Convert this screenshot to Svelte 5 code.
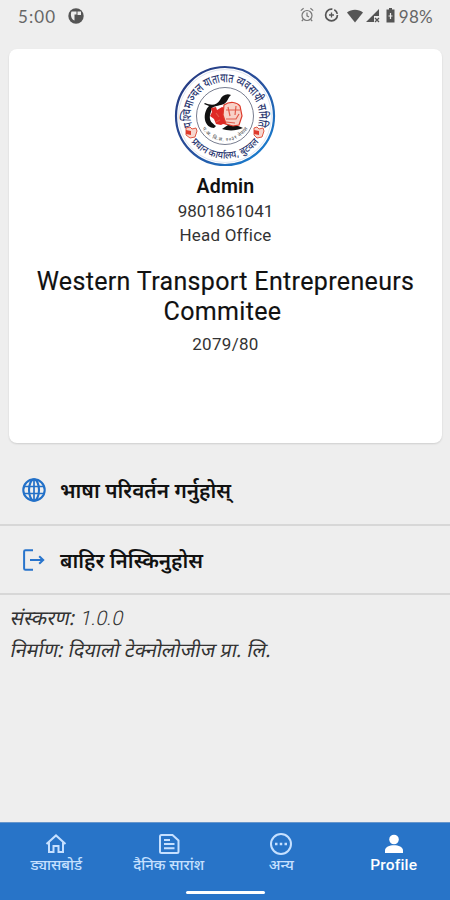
<script>
  const tabs = [
    { label: 'ड्यासबोर्ड', icon: 'home' },
    { label: 'दैनिक सारांश', icon: 'doc' },
    { label: 'अन्य', icon: 'more' },
    { label: 'Profile', icon: 'person', active: true }
  ];
</script>

<div class="screen">
  <header class="status">
    <span class="time">5:00</span>
    <svg class="notify" width="16" height="16" viewBox="0 0 16 16">
      <circle cx="8" cy="8" r="7.7" fill="#555" />
      <path d="M3.500 3.500h5v3h-2v6C3.500 11.500 2 7 3.500 3.500zM9.500 3.500H13v3.500H9.500z" fill="#eee" />
    </svg>
    <div class="system">
      <svg width="14" height="16" viewBox="0 0 14 16" fill="none" stroke="#777" stroke-width="1.200">
        <circle cx="7" cy="8.500" r="5" /><path d="M.8 3.600 3.600 1.300M13.200 3.600 10.400 1.300M7 5.500v3.300l2 1.200M3.200 12.500l-1.400 1.700M10.800 12.500l1.400 1.700" />
      </svg>
      <svg class="saver" width="15" height="16" viewBox="0 0 15 16" fill="none" stroke="#555">
        <circle cx="7.500" cy="8" r="5.900" stroke-width="1.700" stroke-dasharray="28 2 5 2" /><path d="M7.500 5.500v5M5 8h5" stroke-width="1.300" />
      </svg>
      <svg class="wifi" width="16" height="14" viewBox="0 0 16 14"><path d="M0 3.500C4.500-.3 11.500-.3 16 3.500L8 13.500z" fill="#555" /></svg>
      <svg class="signal" width="14" height="14" viewBox="0 0 14 14" fill="#555"><path d="M13 0v7H8v6H0z" /><path d="m9 9 4 4m0-4-4 4" stroke="#555" stroke-width="1.300" /></svg>
      <svg class="battery" width="9" height="15" viewBox="0 0 9 15"><path d="M3 0h3v1.500h2.500v13H.5v-13H3z" fill="#555" /><path d="M4.500 5v6M2.500 8h4" stroke="#eee" stroke-width="1.200" /></svg>
      <span class="percent">98%</span>
    </div>
  </header>

  <section class="card">
    <svg class="logo" width="102" height="102" viewBox="0 0 102 102">
      <defs>
        <linearGradient id="ring" x1="0" y1="0" x2="1" y2="1"><stop offset="0" stop-color="#26377c" /><stop offset=".5" stop-color="#284f9c" /><stop offset="1" stop-color="#1689dc" /></linearGradient>
        <path id="topArc" d="M18.600 61.500A34 34 0 1 1 83.400 61.500" />
        <path id="lowArc" d="M12 68A42.500 42.500 0 0 0 90 68" />
        <path id="innerArc" d="M25.500 57A26.500 26.500 0 0 0 76.500 57" />
      </defs>
      <circle cx="51" cy="51" r="49" fill="#fff" stroke="url(#ring)" stroke-width="2.200" />
      <circle cx="51" cy="51" r="46.500" fill="none" stroke="#c2cce2" stroke-width=".5" />
      <circle cx="51" cy="51" r="28.500" fill="none" stroke="#555c72" stroke-width=".8" />
      <text class="seal top"><textPath href="#topArc" startOffset="50%" text-anchor="middle" textLength="127" lengthAdjust="spacingAndGlyphs">पश्चिमाञ्चल यातायात व्यवसायी समिति</textPath></text>
      <text class="seal low"><textPath href="#lowArc" startOffset="50%" text-anchor="middle" textLength="78" lengthAdjust="spacingAndGlyphs">प्रधान कार्यालय, बुटवल</textPath></text>
      <text class="seal inner"><textPath href="#innerArc" startOffset="50%" text-anchor="middle" textLength="54">प.अ. वि.सं. २०३१ नेपाल</textPath></text>
      <path d="M31 38C38 41 43 40 46 35c2-5 7-7 11-5-3 2-3 7-7 9-4 2-8 1-12 4l-2 7c-1 6 2 8 6 11l-2 2c-4 0-8-3-9-8-1-6 1-11 4-14l-5-2z" fill="#111" />
      <path d="M48 64l9-6 12 5c-7 3-15 3-21 1z" fill="#111" />
      <path d="M37 43l5-1 1 3 5-3 6 2v5l3 4-3 7-5-1-2 1-5-1-2-5-4-3 2-4z" fill="#df2925" />
      <path d="M50 40c6-4 13-3 16 1l2 10-3 9-6 1-7-2-3-9z" fill="#f8d2c8" stroke="#dd3929" stroke-width="1.200" />
      <path d="M52 45h14M54 42l2 9m6-10-1 9m-9 4h10l3-5M52 57l9 1m-19-10 3 4m1 3-4 2" fill="none" stroke="#e25b4b" stroke-width="1.200" />
      <g fill="#f6d6ce" stroke="#df5844" stroke-width="1"><path d="M12 63l4-1 2 2 4-1 1 3-2 6-5 1-4-3z" /><path d="M80 63l3-1 2 2 4-1 1 3-2 6-5 1-3-3z" /></g>
      <path d="M12 65l5 1v4l-5-1zM80 65l5 1v4l-5-1z" fill="#df3a2c" />
    </svg>
    <h2>Admin</h2>
    <p class="phone">9801861041</p>
    <p class="office">Head Office</p>
    <h1>Western Transport Entrepreneurs <br /><span class="second-line">Commitee</span></h1>
    <p class="year">2079/80</p>
  </section>

  <div class="row first">
    <svg width="24" height="24" viewBox="0 0 24 24" fill="none" stroke="#2270c8" stroke-width="2.100"><circle cx="12" cy="12" r="10.700" /><ellipse cx="12" cy="12" rx="5" ry="10.700" /><path d="M12 1.300v21.400M2 8.500h20M2 15.500h20" stroke-width="1.700" /></svg>
    <span class="lang">भाषा परिवर्तन गर्नुहोस्</span>
  </div>
  <div class="row second">
    <svg width="24" height="24" viewBox="0 0 24 24" fill="none" stroke="#2874cc" stroke-width="2"><path d="M11 2.200H3.500q-1.400 0-1.400 1.400v16.800q0 1.400 1.400 1.400H11" /><path d="M8 12h13M17.200 8.200 21.200 12l-4 3.800" /></svg>
    <span class="logout">बाहिर निस्किनुहोस</span>
  </div>

  <div class="about">
    <p><span class="slant">संस्करण: <span class="num">1.0.0</span></span></p>
    <p><span class="slant maker">निर्माण: दियालो टेक्नोलोजीज प्रा. लि.</span></p>
  </div>

  <nav>
    <div class="tabs">
      {#each tabs as tab}
        <div class="tab" class:active={tab.active}>
          <svg width="24" height="24" viewBox="0 0 24 24" fill="none" stroke="currentColor" stroke-width="2">
            {#if tab.icon === 'home'}
              <path d="M2.500 12 12 3.400l9.500 8.600M5 10.500V20h4.500v-6h5v6H19v-9.500" />
            {:else if tab.icon === 'doc'}
              <path d="M4.500 3h11L21.500 8.500v11q0 1.500-1.500 1.500H4.500Q3 21 3 19.500v-15Q3 3 4.500 3zM7 8h6M7 12h10.500M7 16.200h10.500" />
            {:else if tab.icon === 'more'}
              <circle cx="12" cy="12" r="10" /><path d="M6 12h2.500M10.750 12h2.500M15.500 12H18" stroke-width="2.400" />
            {:else}
              <g fill="currentColor" stroke="none"><circle cx="12" cy="7.500" r="4.800" /><path d="M3 21v-2.500c0-7 18-7 18 0V21z" /></g>
            {/if}
          </svg>
          <span>{tab.label}</span>
        </div>
      {/each}
    </div>
    <div class="handle"></div>
  </nav>
</div>

<style>
  :global(body) { background: #eee; }
  .screen { width: 450px; height: 900px; display: flex; flex-direction: column; background: #eee; font-family: Roboto, "Noto Sans", "Noto Sans Devanagari", sans-serif; color: #111; overflow: hidden; }
  p, h1, h2 { margin: 0; font-weight: 400; white-space: nowrap; }
  svg { flex: none; display: block; }
  .status { height: 49px; box-sizing: border-box; padding: 7px 17px 0 18px; display: flex; align-items: flex-start; color: #666; font: 17px/20px Lato, sans-serif; }
  .time { width: 50px; letter-spacing: 1.100px; }
  .notify { margin-top: 1px; }
  .system { margin-left: auto; display: flex; align-items: flex-start; }
  .saver { margin-left: 10px; }
  .wifi { margin: 2px 0 0 8px; }
  .signal { margin: 2px 0 0 3px; }
  .battery { margin: 1px 4px 0 6px; }
  .percent { font-size: 17px; letter-spacing: .3px; }
  .card { height: 394px; box-sizing: border-box; flex: none; margin: 0 8px 0 9px; padding-top: 16px; background: #fff; border-radius: 8px; box-shadow: 0 1px 2px #0002; display: flex; flex-direction: column; align-items: center; text-align: center; }
  .logo { position: relative; left: -1px; }
  .seal { fill: #28356f; font-family: "Noto Sans", "Noto Sans Devanagari", sans-serif; font-weight: 500; }
  .top { font-size: 12.500px; }
  .low { font-size: 10px; }
  .inner { font-size: 5px; fill: #555; }
  h2 { font-size: 19.500px; line-height: 24px; font-weight: 600; margin-top: 8px; letter-spacing: .2px; }
  .phone, .office, .year { color: #333; font-weight: 400; font-size: 17px; line-height: 24px; }
  .phone { letter-spacing: 0; }
  .office { letter-spacing: .2px; }
  h1 { font-size: 25px; line-height: 30px; font-weight: 450; -webkit-text-stroke: .15px #111; letter-spacing: .35px; margin-top: 20px; }
  .second-line { position: relative; left: -3px; }
  .year { margin-top: 5px; letter-spacing: .3px; }
  .row { display: flex; align-items: center; box-sizing: border-box; border-bottom: 2px solid #d7d7d7; padding-left: 22px; gap: 14px; font-family: "Noto Sans", "Noto Sans Devanagari", sans-serif; font-weight: 600; line-height: 30px; flex: none; }
  .first { height: 83px; padding-top: 12px; }
  .second { height: 69px; padding-top: 1px; }
  .lang, .logout { font-size: 20.700px; white-space: nowrap; }
  .about { padding: 7px 11px; font: 20px/31px "Noto Sans", "Noto Sans Devanagari", sans-serif; color: #333; }
  .slant { display: inline-block; transform: skewX(-12deg); }
  .slant.maker { font-size: 19.900px; }
  .num { font-family: Roboto, sans-serif; font-weight: 350; font-size: 20px; }
  nav { height: 78px; flex: none; margin-top: auto; background: #2874c8; color: #c6e0ff; border-top: 1px solid #6796cc; box-sizing: border-box; }
  .tabs { height: 67px; display: grid; grid-template-columns: repeat(4, 1fr); }
  .tab { display: flex; flex-direction: column; align-items: center; padding-top: 9px; }
  .tab span { font: 500 14.800px/16px "Noto Sans", "Noto Sans Devanagari", sans-serif; white-space: nowrap; }
  .tab.active { color: #fff; }
  .tab.active span { font: 500 15.500px/18px Roboto, sans-serif; letter-spacing: .2px; }
  .handle { width: 79px; height: 3px; border-radius: 2px; background: #fff; margin: 1px auto 0; }
</style>
